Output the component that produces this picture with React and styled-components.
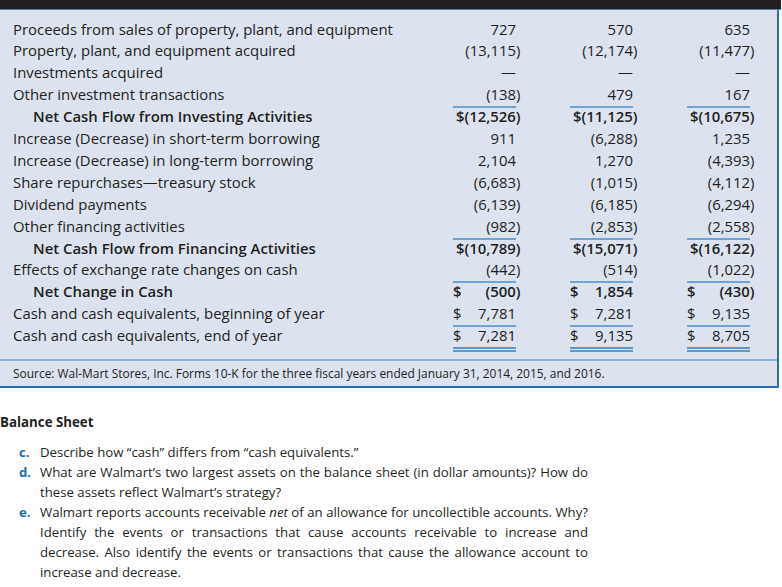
import React from 'react';
import styled, { createGlobalStyle } from 'styled-components';

const Global = createGlobalStyle`
  html, body { margin: 0; padding: 0; background: #ffffff; overflow: hidden; }
  body {
    font-family: "Open Sans", "Liberation Sans", sans-serif;
    color: #231f20;
  }
`;

const Page = styled.div`
  width: 781px;
`;

const TopBar = styled.div`
  height: 9px;
  background: #231f20;
  border-bottom: 1px solid #4f84b0;
`;

const Panel = styled.section`
  width: 777px;
  background: #dce3ef;
  border-right: 2px solid #2d6db0;
  border-bottom: 2px solid #2d6db0;
  padding-top: 8.5px;
`;

const Table = styled.div`
  padding: 0 27px 0 13px;
  margin-bottom: 6.5px;
`;

const Row = styled.div`
  display: grid;
  grid-template-columns: 1fr repeat(3, 63px);
  column-gap: 54px;
  font-size: 14.9px;
  line-height: 21.9px;
`;

const Label = styled.div`
  padding-left: ${p => (p.$indent ? '20px' : '0')};
  font-weight: ${p => (p.$bold ? 600 : 400)};
  white-space: nowrap;
`;

const Amount = styled.div`
  display: flex;
  justify-content: ${p => (p.$dollar ? 'space-between' : 'flex-end')};
  white-space: nowrap;
  font-weight: ${p => (p.$bold ? 600 : 400)};
  box-shadow: ${p => (p.$ruleTop ? 'inset 0 2px 0 #72a2d1' : 'none')};
  border-bottom: ${p => (p.$double ? '5px double #5f97cc' : '0')};
`;

const Hang = styled.span`
  margin-right: -4.5px;
`;

const Footer = styled.div`
  border-top: 2px solid #8ab2da;
  padding-left: 13px;
  font-size: 11.95px;
  line-height: 25px;
`;

const Heading = styled.h3`
  margin: 24px 0 0 0;
  font-size: 13.3px;
  line-height: 20px;
  font-weight: 700;
`;

const List = styled.ol`
  list-style: none;
  margin: 10px 0 0 0;
  padding: 0;
  width: 588px;
`;

const Item = styled.li`
  display: grid;
  grid-template-columns: 40px minmax(0, 548px);
  font-size: 13.2px;
  line-height: 20px;
`;

const Letter = styled.span`
  padding-left: 19px;
  color: #1b6cb4;
  font-weight: 700;
`;

const ItemBody = styled.div`
  display: flex;
  flex-direction: column;
  min-width: 0;
`;

const Line = styled.span`
  display: block;
  white-space: nowrap;
  text-align: ${p => (p.$justify ? 'justify' : 'left')};
  text-align-last: ${p => (p.$justify ? 'justify' : 'left')};
`;

const rows = [
  { label: 'Proceeds from sales of property, plant, and equipment', v: ['727', '570', '635'] },
  { label: 'Property, plant, and equipment acquired', v: ['(13,115)', '(12,174)', '(11,477)'] },
  { label: 'Investments acquired', v: ['—', '—', '—'] },
  { label: 'Other investment transactions', v: ['(138)', '479', '167'] },
  { label: 'Net Cash Flow from Investing Activities', v: ['$(12,526)', '$(11,125)', '$(10,675)'], total: true, ruleTop: true },
  { label: 'Increase (Decrease) in short-term borrowing', v: ['911', '(6,288)', '1,235'] },
  { label: 'Increase (Decrease) in long-term borrowing', v: ['2,104', '1,270', '(4,393)'] },
  { label: 'Share repurchases—treasury stock', v: ['(6,683)', '(1,015)', '(4,112)'] },
  { label: 'Dividend payments', v: ['(6,139)', '(6,185)', '(6,294)'] },
  { label: 'Other financing activities', v: ['(982)', '(2,853)', '(2,558)'] },
  { label: 'Net Cash Flow from Financing Activities', v: ['$(10,789)', '$(15,071)', '$(16,122)'], total: true, ruleTop: true },
  { label: 'Effects of exchange rate changes on cash', v: ['(442)', '(514)', '(1,022)'] },
  { label: 'Net Change in Cash', v: ['(500)', '1,854', '(430)'], dollar: true, total: true, ruleTop: true },
  { label: 'Cash and cash equivalents, beginning of year', v: ['7,781', '7,281', '9,135'], dollar: true },
  { label: 'Cash and cash equivalents, end of year', v: ['7,281', '9,135', '8,705'], dollar: true, ruleTop: true, double: true },
];

const questions = [
  { letter: 'c.', lines: [<>Describe how “cash” differs from “cash equivalents.”</>] },
  {
    letter: 'd.',
    lines: [
      <>What are Walmart’s two largest assets on the balance sheet (in dollar amounts)? How do</>,
      <>these assets reflect Walmart’s strategy?</>,
    ],
  },
  {
    letter: 'e.',
    lines: [
      <>Walmart reports accounts receivable <em>net</em> of an allowance for uncollectible accounts. Why?</>,
      <>Identify the events or transactions that cause accounts receivable to increase and</>,
      <>decrease. Also identify the events or transactions that cause the allowance account to</>,
      <>increase and decrease.</>,
    ],
  },
  {
    letter: 'f.',
    lines: [<>How does accumulated depreciation and amortization differ from depreciation expense?</>],
  },
];

function Value({ text }) {
  if (text.endsWith(')')) {
    return (
      <span>
        {text.slice(0, -1)}
        <Hang>)</Hang>
      </span>
    );
  }
  return <span>{text}</span>;
}

export default function App() {
  return (
    <Page>
      <Global />
      <TopBar />
      <Panel>
        <Table>
          {rows.map((r, i) => (
            <Row key={i}>
              <Label $indent={r.total} $bold={r.total}>{r.label}</Label>
              {r.v.map((val, j) => (
                <Amount
                  key={j}
                  $dollar={r.dollar}
                  $bold={r.total}
                  $ruleTop={r.ruleTop}
                  $double={r.double}
                >
                  {r.dollar && <span>$</span>}
                  <Value text={val} />
                </Amount>
              ))}
            </Row>
          ))}
        </Table>
        <Footer>
          Source: Wal-Mart Stores, Inc. Forms 10-K for the three fiscal years ended January 31, 2014, 2015, and 2016.
        </Footer>
      </Panel>
      <Heading>Balance Sheet</Heading>
      <List>
        {questions.map(q => (
          <Item key={q.letter}>
            <Letter>{q.letter}</Letter>
            <ItemBody>
              {q.lines.map((l, k) => (
                <Line key={k} $justify={k < q.lines.length - 1 && q.letter !== 'f.'}>
                  {l}
                </Line>
              ))}
            </ItemBody>
          </Item>
        ))}
      </List>
    </Page>
  );
}
